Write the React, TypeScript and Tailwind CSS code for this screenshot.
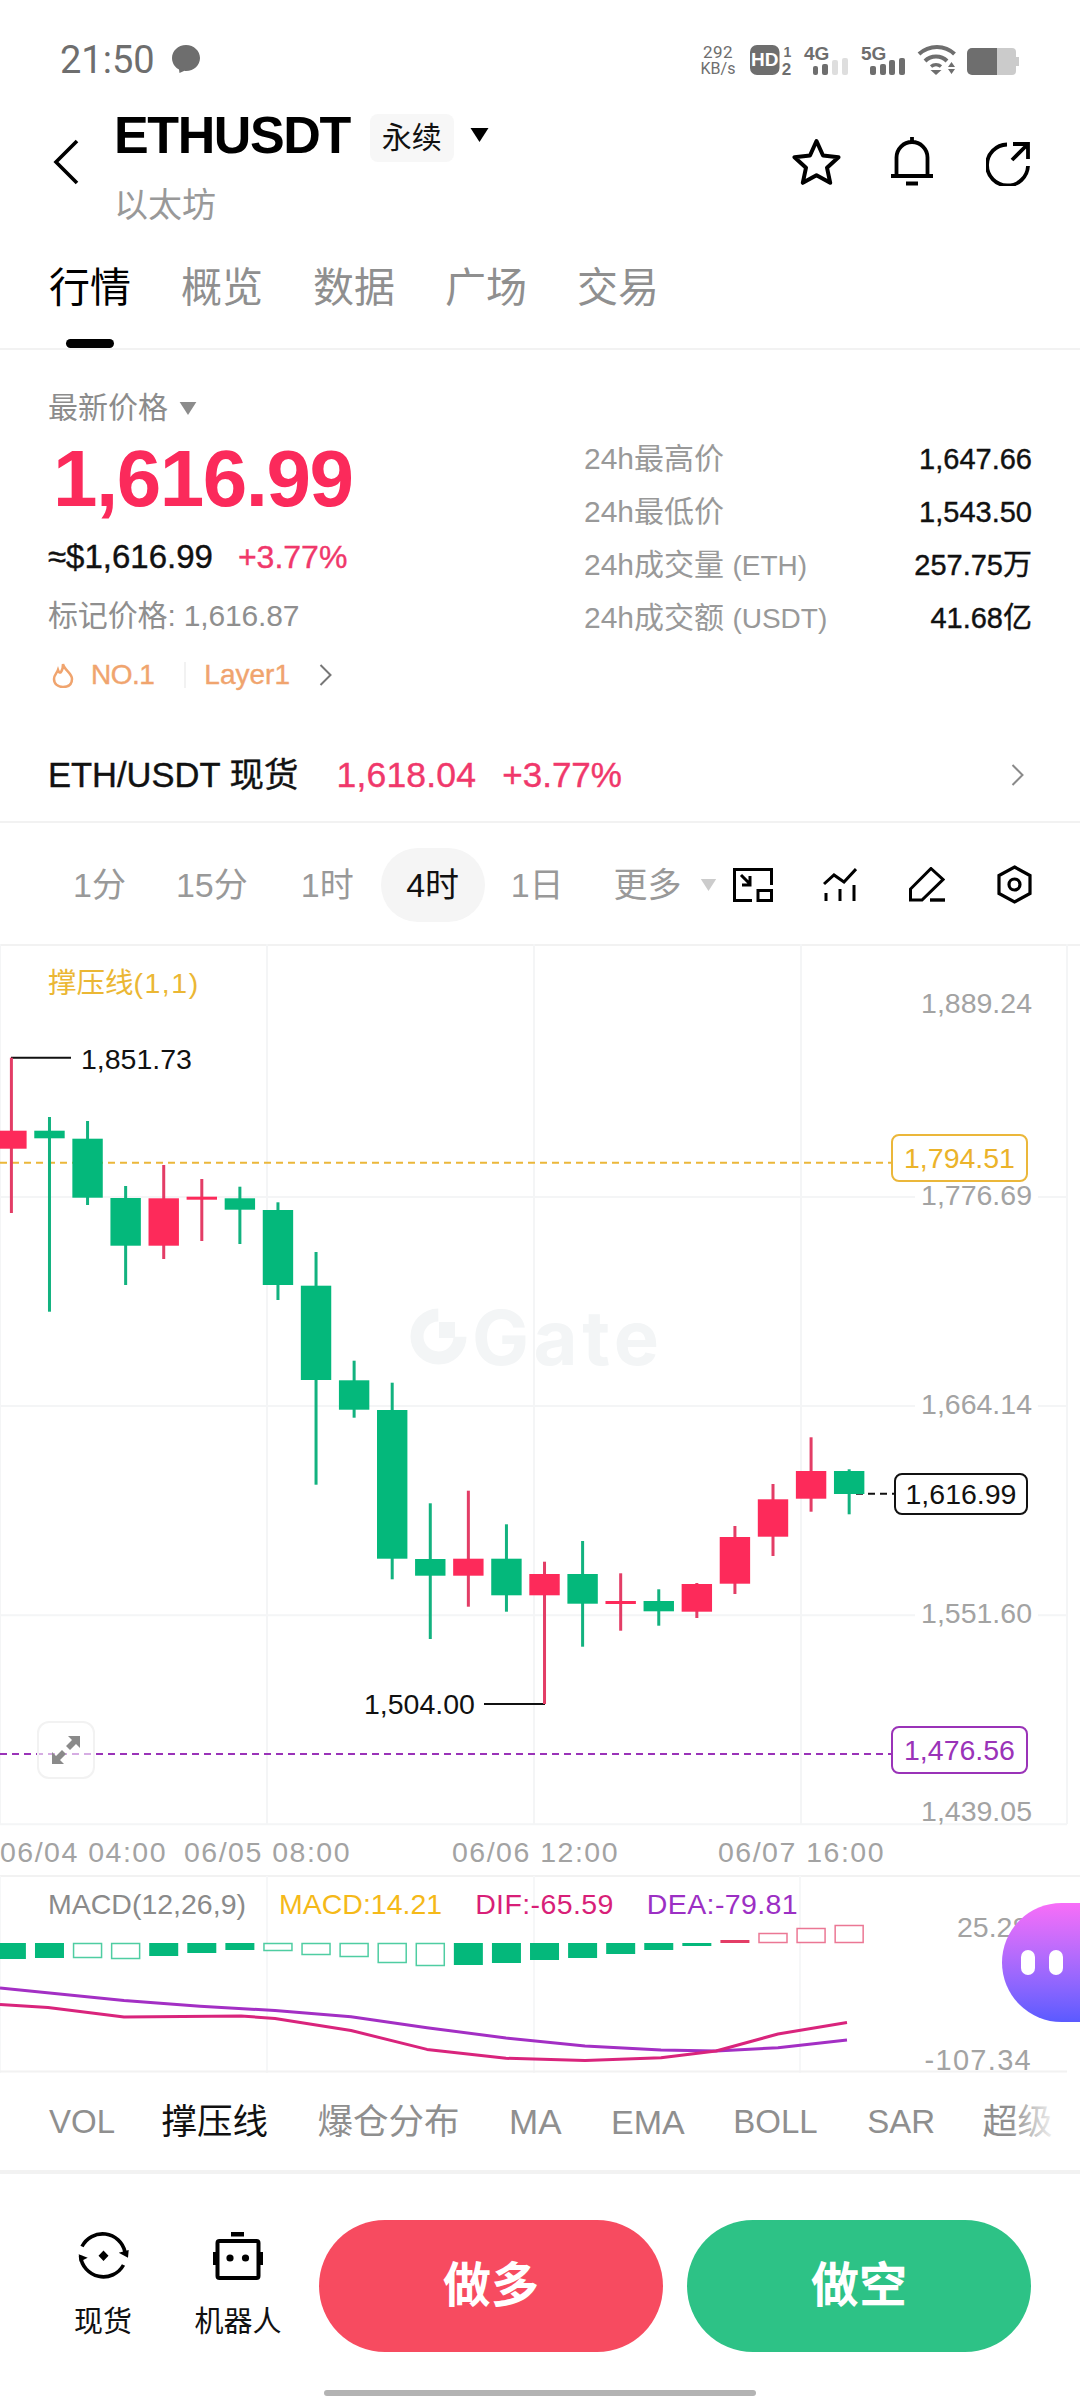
const candles: [number, number, number, number, 'r' | 'g'][] = [
  [1057.7, 1130.7, 1148.7, 1213, 'r'],
  [1117, 1130.7, 1138.3, 1311.7, 'g'],
  [1121, 1138.7, 1197.7, 1205, 'g'],
  [1186, 1198, 1245.7, 1285, 'g'],
  [1165, 1198.3, 1245.7, 1259, 'r'],
  [1179, 1196.7, 1199.7, 1241, 'r'],
  [1186.7, 1198.3, 1209.7, 1244, 'g'],
  [1202.3, 1210, 1285, 1300, 'g'],
  [1252, 1285.7, 1380, 1484.7, 'g'],
  [1360.7, 1380.3, 1409.7, 1417.7, 'g'],
  [1382.7, 1410, 1558.7, 1579.3, 'g'],
  [1503.3, 1559, 1575.7, 1639, 'g'],
  [1490.7, 1558.7, 1575.7, 1606.7, 'r'],
  [1524.3, 1558.7, 1595.3, 1611.7, 'g'],
  [1561.7, 1574, 1595.3, 1704, 'r'],
  [1541, 1574, 1603.7, 1646.7, 'g'],
  [1573.3, 1601, 1604, 1630.7, 'r'],
  [1589.3, 1601, 1611.3, 1625.7, 'g'],
  [1583, 1584, 1611.7, 1618, 'r'],
  [1526, 1537, 1583.7, 1594, 'r'],
  [1484, 1499.3, 1536.7, 1556, 'r'],
  [1437.3, 1471, 1498.7, 1511.7, 'r'],
  [1469.3, 1471, 1494, 1514.3, 'g'],
];

// histogram: top and bottom in px from the section top, hollow bars have only an outline
const macdBars: [number, number, 'r' | 'g', boolean][] = [
  [68, 84, 'g', true],
  [68, 83, 'g', true],
  [68, 83, 'g', false],
  [68, 84, 'g', false],
  [68, 81, 'g', true],
  [68, 78, 'g', true],
  [68, 75, 'g', true],
  [68, 76, 'g', false],
  [68, 80, 'g', false],
  [68, 82, 'g', false],
  [68, 88, 'g', false],
  [68, 91, 'g', false],
  [68, 90, 'g', true],
  [68, 88, 'g', true],
  [68, 85, 'g', true],
  [68, 83, 'g', true],
  [68, 79, 'g', true],
  [68, 75, 'g', true],
  [68, 71, 'g', true],
  [65, 68, 'r', true],
  [58, 68, 'r', false],
  [53, 68, 'r', false],
  [50, 68, 'r', false],
];

const candleX = (i: number) => 11.4 + 38.08 * i;

const Triangle = ({ className, fill }: { className: string; fill: string }) => (
  <svg className={className} viewBox="0 0 20 14">
    <path d="M1 0 H19 L10 14 Z" fill={fill} />
  </svg>
);

const StatusBar = () => (
  <div className="flex h-[90px] pl-[60px] relative">
    <span className="mt-[40px] h-[40px] text-[38px] leading-[40px] text-[#6e6e6e] font-['Roboto',sans-serif]">21:50</span>
    <svg className="ml-[15px] mt-[44px] w-[32px] h-[30px]" viewBox="0 0 32 30">
      <path d="M16 1 C8 1 2 7 2 14 C2 20 6 24 9 25.5 L9.5 29 L14.5 26.8 C15 27 15.5 27 16 27 C24 27 30 21 30 14 C30 7 24 1 16 1 Z" fill="#6e6e6e" />
    </svg>
    <div className="ml-auto mr-[343px] mt-[44px] w-[38px] flex flex-col items-center text-[#6e6e6e] font-['Roboto',sans-serif]">
      <span className="text-[17px] leading-[17px] tracking-[0.5px]">292</span>
      <span className="text-[16px] leading-[15px]">KB/s</span>
    </div>
    <svg className="absolute left-[748px] top-[42px] w-[276px] h-[36px]" viewBox="748 42 276 36">
      <rect x="750" y="45" width="29.5" height="30" rx="7" fill="#6e6e6e" />
      <text x="764.7" y="66" textAnchor="middle" fontSize="19" fontWeight="700" fill="#fff" fontFamily="Liberation Sans">HD</text>
      <text x="787.5" y="57" textAnchor="middle" fontSize="14" fontWeight="700" fill="#6e6e6e" fontFamily="Liberation Sans">1</text>
      <text x="786.5" y="75" textAnchor="middle" fontSize="17" fontWeight="700" fill="#6e6e6e" fontFamily="Liberation Sans">2</text>
      <text x="804" y="60" fontSize="19" fontWeight="700" fill="#6e6e6e" fontFamily="Liberation Sans">4G</text>
      <rect x="813" y="66" width="5" height="9" rx="2" fill="#6e6e6e" />
      <rect x="822" y="64" width="6" height="11" rx="2" fill="#6e6e6e" />
      <rect x="832" y="60" width="6" height="15" rx="2" fill="#dedede" />
      <rect x="842" y="58" width="6" height="17" rx="2" fill="#dedede" />
      <text x="861" y="60" fontSize="19" fontWeight="700" fill="#6e6e6e" fontFamily="Liberation Sans">5G</text>
      <rect x="870" y="66" width="6" height="9" rx="2" fill="#6e6e6e" />
      <rect x="880" y="64" width="6" height="11" rx="2" fill="#6e6e6e" />
      <rect x="889" y="60" width="6" height="15" rx="2" fill="#6e6e6e" />
      <rect x="899" y="58" width="6" height="17" rx="2" fill="#6e6e6e" />
      <path d="M919 54 C929 44.5 945 44.5 954.5 54" fill="none" stroke="#6e6e6e" strokeWidth="4" />
      <path d="M925 61 C931 55 941 55 947 61" fill="none" stroke="#6e6e6e" strokeWidth="4" />
      <path d="M931 66.5 C934 64 938 64 941 66.5" fill="none" stroke="#6e6e6e" strokeWidth="3.5" />
      <path d="M936 75 L930.5 70 H941.5 Z" fill="#6e6e6e" />
      <path d="M951.5 62 L955 67 H948 Z M948 69 H955 L951.5 74 Z" fill="#6e6e6e" />
      <path d="M967 53 a5 5 0 0 1 5 -5 H997 V75 H972 a5 5 0 0 1 -5 -5 Z" fill="#6e6e6e" />
      <path d="M997 48 H1012 a4 4 0 0 1 4 4 V57 H1019 V66 H1016 V71 a4 4 0 0 1 -4 4 H997 Z" fill="#cbcbcb" />
    </svg>
  </div>
);

const Header = () => (
  <div className="flex h-[155px]">
    <svg className="ml-[52px] mt-[48px] w-[28px] h-[48px]" viewBox="0 0 28 48">
      <path d="M25 3 L4 24 L25 45" fill="none" stroke="#000" strokeWidth="3.6" />
    </svg>
    <div className="ml-[34px] flex flex-col">
      <div className="mt-[15px] h-[60px] flex items-center">
        <span className="text-[52px] leading-[60px] font-bold tracking-[-1.4px] text-black -mt-[1px]">ETHUSDT</span>
        <span className="ml-[20px] mt-[5px] w-[84px] h-[48px] flex items-center justify-center bg-[#f7f7f7] rounded-[8px] text-[30px] leading-[48px] text-[#111]">永续</span>
        <Triangle className="ml-[15px] w-[21px] h-[14px]" fill="#000" />
      </div>
      <span className="mt-[18px] h-[44px] text-[34px] leading-[44px] text-[#999]">以太坊</span>
    </div>
    <div className="ml-auto mr-[50px] flex">
      <svg className="mt-[48px] w-[49px] h-[47px]" viewBox="0 0 49 47">
        <path d="M24.5 3 L31 17.5 L46.5 19.2 L35 29.7 L38.2 44.8 L24.5 37.2 L10.8 44.8 L14 29.7 L2.5 19.2 L18 17.5 Z" fill="none" stroke="#000" strokeWidth="4" strokeLinejoin="round" />
      </svg>
      <svg className="ml-[50px] mt-[47px] w-[42px] h-[50px]" viewBox="0 0 42 50">
        <path d="M21 0 V6 M5.5 39 V20.5 a15.5 15.5 0 0 1 31 0 V39 M0 39 H42" fill="none" stroke="#000" strokeWidth="3.8" />
        <path d="M15 46.5 H27" stroke="#000" strokeWidth="4" />
      </svg>
      <svg className="ml-[53px] mt-[52px] w-[44px] h-[44px]" viewBox="0 0 44 44">
        <path d="M21 2.5 A20.5 20.5 0 1 0 42 24 M26 18 L41 3 M27 2 H42 V17" fill="none" stroke="#000" strokeWidth="3.8" />
      </svg>
    </div>
  </div>
);

const Tabs = () => (
  <div className="relative flex h-[105px] gap-[50px] pl-[49px] pt-[18px] border-b-2 border-[#f2f2f2] text-[41px] leading-[50px] text-[#8f8f8f]">
    <span className="text-black">行情</span>
    <span>概览</span>
    <span>数据</span>
    <span>广场</span>
    <span>交易</span>
    <div className="absolute left-[66px] top-[94px] w-[48px] h-[9px] rounded-full bg-black" />
  </div>
);

const stats = [
  { label: '24h最高价', suffix: '', value: '1,647.66' },
  { label: '24h最低价', suffix: '', value: '1,543.50' },
  { label: '24h成交量 ', suffix: '(ETH)', value: '257.75万' },
  { label: '24h成交额 ', suffix: '(USDT)', value: '41.68亿' },
];

const MarketInfo = () => (
  <div className="h-[473px] border-b-2 border-[#f2f2f2] flex flex-col">
    <div className="flex">
      <div className="w-[584px] pl-[48px] pt-[36px] flex flex-col">
        <div className="flex items-center h-[44px] text-[30px] leading-[44px] text-[#8c8c8c]">
          最新价格
          <Triangle className="ml-[10px] w-[20px] h-[13px]" fill="#8c8c8c" />
        </div>
        <span className="mt-[9px] ml-[5px] h-[80px] text-[80px] leading-[80px] font-bold tracking-[-1.5px] text-[#fb2a5b]">1,616.99</span>
        <div className="mt-[18px] flex h-[40px] text-[33px] leading-[40px] gap-[25px] [-webkit-text-stroke:0.4px]">
          <span className="text-[#111]">≈$1,616.99</span>
          <span className="text-[32px] text-[#f0386b]">+3.77%</span>
        </div>
        <span className="mt-[19px] h-[40px] text-[30px] leading-[40px] tracking-[-0.15px] text-[#8f8f8f]">标记价格: 1,616.87</span>
        <div className="mt-[19px] flex items-center h-[40px] text-[28px] leading-[40px] text-[#f0a46e] [-webkit-text-stroke:0.4px]">
          <svg className="ml-[4px] w-[22px] h-[25px]" viewBox="0 0 22 25">
            <path d="M11 1 C12 7 20 10 20 16 C20 22 16 24 11 24 C6 24 2 21 2 16 C2 12 5 10 6 7 C7 10 8 10 9 9 C10.5 7 11 4 11 1 Z" fill="none" stroke="#f0a46e" strokeWidth="2.5" />
          </svg>
          <span className="ml-[17px] tracking-[-0.5px]">NO.1</span>
          <div className="ml-[30px] w-[2px] h-[26px] bg-[#f2f2f2]" />
          <span className="ml-[18px]">Layer1</span>
          <svg className="ml-[29px] w-[13px] h-[22px]" viewBox="0 0 13 22">
            <path d="M1.5 1 L11.5 11 L1.5 21" fill="none" stroke="#777" strokeWidth="2" />
          </svg>
        </div>
      </div>
      <div className="w-[448px] pt-[89px] flex flex-col gap-[13px]">
        {stats.map((s) => (
          <div key={s.label} className="flex justify-between h-[40px] leading-[40px]">
            <span className="text-[30px] text-[#999] whitespace-pre">
              {s.label}
              <span className="text-[28px]">{s.suffix}</span>
            </span>
            <span className="text-[29px] text-[#111] [-webkit-text-stroke:0.4px]">{s.value}</span>
          </div>
        ))}
      </div>
    </div>
    <div className="mt-[55px] pl-[48px] flex items-center h-[50px] text-[34.5px] leading-[50px] [-webkit-text-stroke:0.4px]">
      <span className="text-[#111]">ETH/USDT 现货</span>
      <span className="ml-[38px] text-[35.5px] tracking-[0.2px] text-[#f0386b]">1,618.04</span>
      <span className="ml-[26px] text-[35px] text-[#f0386b]">+3.77%</span>
      <svg className="ml-auto mr-[56px] w-[13px] h-[22px]" viewBox="0 0 13 22">
        <path d="M1.5 1 L11.5 11 L1.5 21" fill="none" stroke="#8a8a8a" strokeWidth="2" />
      </svg>
    </div>
  </div>
);

const Timeframes = () => (
  <div className="h-[121px] pt-[2px] flex items-center pl-[73px] text-[34px] leading-[50px] text-[#999]">
    <span>1分</span>
    <span className="ml-[50px]">15分</span>
    <span className="ml-[53px]">1时</span>
    <span className="ml-[27px] w-[104px] h-[74px] rounded-[37px] bg-[#f5f5f5] flex items-center justify-center text-[#111]">4时</span>
    <span className="ml-[26px]">1日</span>
    <span className="ml-[50px]">更多</span>
    <Triangle className="ml-[17px] w-[19px] h-[12px]" fill="#cccccc" />
    <svg className="ml-[15px] w-[40px] h-[34px]" viewBox="0 0 40 34">
      <path d="M38.5 17 V1.5 H1.5 V32.5 H19" fill="none" stroke="#000" strokeWidth="3" />
      <rect x="25" y="22.5" width="13.5" height="10" fill="none" stroke="#000" strokeWidth="3" />
      <path d="M8 7 L17 16 M17 8 V17 H9" fill="none" stroke="#000" strokeWidth="3" />
    </svg>
    <svg className="ml-[50px] w-[34px] h-[33px]" viewBox="0 0 34 33">
      <path d="M1 16 L11 7 L21 14 L33 1" fill="none" stroke="#000" strokeWidth="3" />
      <path d="M3 25 V33 M17 21 V33 M31 17 V33" stroke="#000" strokeWidth="3" />
    </svg>
    <svg className="ml-[52px] w-[36px] h-[35px]" viewBox="0 0 36 35">
      <path d="M22 1.5 L34 12.5 L13 33 H1.5 V22 Z" fill="none" stroke="#000" strokeWidth="3" />
      <path d="M21 33 H36" stroke="#000" strokeWidth="3.4" />
    </svg>
    <svg className="ml-[52px] w-[35px] h-[39px]" viewBox="0 0 35 39">
      <path d="M17.5 2 L33 10.5 V28.5 L17.5 37 L2 28.5 V10.5 Z" fill="none" stroke="#000" strokeWidth="3.2" />
      <circle cx="17.5" cy="19.5" r="5.5" fill="none" stroke="#000" strokeWidth="3.2" />
    </svg>
  </div>
);

const Chart = () => (
  <div className="relative h-[931px] text-[28.5px] leading-[36px]">
    <svg className="absolute left-0 top-0 w-[1080px] h-[931px]" viewBox="0 944 1080 931">
      <path d="M0 945 H1080" stroke="#f2f2f2" strokeWidth="2" />
      <g stroke="#f4f5f6" strokeWidth="2">
        <path d="M0 1197 H1067 M0 1406 H1067 M0 1615.3 H1067 M0 1824.3 H1067" />
        <path d="M0 944 V1824 M267 944 V1824 M534 944 V1824 M801 944 V1824 M1067 944 V1824" />
      </g>
      <path d="M438.3 1315 A21.5 21.5 0 1 0 460 1336.7" fill="none" stroke="#f3f5f6" strokeWidth="13" />
      <rect x="439" y="1322" width="16" height="16" fill="#f3f5f6" />
      <path d="M0 1162.7 H891" stroke="#ebb73a" strokeWidth="2" strokeDasharray="7 5" />
      <path d="M0 1754 H891" stroke="#9a33b8" strokeWidth="2" strokeDasharray="7 5" />
      <path d="M856 1493.7 H895" stroke="#111" strokeWidth="2" strokeDasharray="7 5" />
      <path d="M11 1057.7 H71 M484 1704 H545" stroke="#111" strokeWidth="2" fill="none" />
      {candles.map(([hi, top, bottom, lo, c], i) => {
        const x = candleX(i);
        return (
          <g key={i}>
            <rect x={x - 1.5} y={hi} width="3" height={lo - hi} fill={c === 'r' ? '#e33d66' : '#12b27f'} />
            <rect x={x - 15.2} y={top} width="30.4" height={bottom - top} fill={c === 'r' ? '#fd2a5a' : '#04b87b'} />
          </g>
        );
      })}
    </svg>

    <span className="absolute left-[472px] top-[358px] h-[70px] text-[76px] leading-[70px] font-bold font-['Inter',sans-serif] tracking-[4.5px] text-[#f3f5f6]">Gate</span>

    <span className="absolute left-[48px] top-[21px] text-[#ebb734]">
      撑压线<span className="tracking-[1.5px]">(1,1)</span>
    </span>

    <span className="absolute right-[48px] top-[41px] text-[#a3a3a3]">1,889.24</span>
    <span className="absolute right-[48px] top-[233px] pl-[6px] pr-[6px] -mr-[6px] bg-white text-[#a3a3a3]">1,776.69</span>
    <span className="absolute right-[48px] top-[442px] pl-[6px] pr-[6px] -mr-[6px] bg-white text-[#a3a3a3]">1,664.14</span>
    <span className="absolute right-[48px] top-[651px] pl-[6px] pr-[6px] -mr-[6px] bg-white text-[#a3a3a3]">1,551.60</span>
    <span className="absolute right-[48px] top-[849px] text-[#a3a3a3]">1,439.05</span>

    <div className="absolute left-[891px] top-[190px] w-[137px] h-[48px] flex items-center justify-center bg-white border-2 border-[#ebb73a] rounded-[8px] text-[#ebb32a]">1,794.51</div>
    <div className="absolute left-[894px] top-[529px] w-[134px] h-[42px] flex items-center justify-center bg-white border-2 border-[#111] rounded-[8px] text-[#111]">1,616.99</div>
    <div className="absolute left-[891px] top-[782px] w-[137px] h-[48px] flex items-center justify-center bg-white border-2 border-[#9a33b8] rounded-[8px] text-[#9a33b8]">1,476.56</div>

    <span className="absolute left-[81px] top-[97px] text-[#111]">1,851.73</span>
    <span className="absolute left-[364px] top-[742px] text-[#111]">1,504.00</span>

    <div className="absolute left-[37px] top-[777px] w-[58px] h-[58px] flex items-center justify-center rounded-[12px] border-2 border-[#f2f2f2] bg-white/60">
      <svg className="w-[28px] h-[28px]" viewBox="0 0 28 28">
        <path d="M16 0 H28 V12 L24 8 L18 14 L14 10 L20 4 Z M12 28 H0 V16 L4 20 L10 14 L14 18 L8 24 Z" fill="#8a8a8a" />
      </svg>
    </div>

    <span className="absolute left-0 top-[890px] text-[#a3a3a3] tracking-[1.5px]">06/04 04:00</span>
    <span className="absolute left-[184px] top-[890px] text-[#a3a3a3] tracking-[1.5px]">06/05 08:00</span>
    <span className="absolute left-[452px] top-[890px] text-[#a3a3a3] tracking-[1.5px]">06/06 12:00</span>
    <span className="absolute left-[718px] top-[890px] text-[#a3a3a3] tracking-[1.5px]">06/07 16:00</span>
  </div>
);

const Macd = () => (
  <div className="relative h-[198px] border-t-2 border-[#f2f2f2]">
    <svg className="absolute left-0 -top-[2px] w-[1080px] h-[198px]" viewBox="0 0 1080 198">
      <path d="M0 1 V198 M267 1 V198 M534 1 V198 M800 1 V198" stroke="#f6f7f8" strokeWidth="2" />
      <path d="M0 196.5 H1067" stroke="#f2f2f2" strokeWidth="2" />
      {macdBars.map(([top, bottom, c, filled], i) => {
        const x = candleX(i) - 14.5;
        const col = c === 'r' ? '#e33d66' : '#04b87b';
        return filled ? (
          <rect key={i} x={x} y={top} width="29" height={bottom - top} fill={col} />
        ) : (
          <rect key={i} x={x + 0.5} y={top + 0.5} width="28" height={bottom - top - 1} fill="#fff" stroke={col} strokeOpacity="0.7" strokeWidth="1.5" />
        );
      })}
      <polyline
        points="0,113 124,125.5 200,131.3 275,135.5 351,141.7 427,152.7 506,163 585,171 661,175 716,176 778,172.7 847,165"
        fill="none"
        stroke="#a32fc4"
        strokeWidth="3"
        strokeLinejoin="round"
      />
      <polyline
        points="0,129.6 48,132.4 124,142 241,141 275,143.4 351,155.5 427,174.4 506,183.3 585,185.4 661,182.7 716,176 778,159 847,147.5"
        fill="none"
        stroke="#d9247c"
        strokeWidth="3"
        strokeLinejoin="round"
      />
    </svg>
    <div className="relative pl-[48px] pt-[9px] flex gap-[33px] text-[28.5px] leading-[36px]">
      <span className="text-[#8a8a8a]">MACD(12,26,9)</span>
      <span className="text-[#f5b919]">MACD:14.21</span>
      <span className="text-[#d81f78] tracking-[0.4px]">DIF:-65.59</span>
      <span className="text-[#9c2fc4] tracking-[0.4px]">DEA:-79.81</span>
    </div>
    <span className="absolute left-[957px] top-[32px] text-[28.5px] leading-[36px] text-[#a3a3a3]">25.28</span>
    <span className="absolute right-[48px] top-[165px] text-[29px] leading-[36px] tracking-[1.3px] text-[#a3a3a3]">-107.34</span>
    <div className="absolute left-[1002px] top-[26px] w-[78px] h-[119px] rounded-l-[60px] bg-gradient-to-b from-[#f86df8] to-[#5a5aff] flex items-center gap-[14px] pl-[19px]">
      <div className="w-[14px] h-[25px] rounded-full bg-white" />
      <div className="w-[14px] h-[25px] rounded-full bg-white" />
    </div>
  </div>
);

const Indicators = () => (
  <div className="relative h-[97px] flex items-center pl-[49px] gap-[49.5px] overflow-hidden text-[33px] leading-[50px] text-[#8f8f8f] whitespace-nowrap">
    <span>VOL</span>
    <span className="text-[35.5px] text-[#111] -ml-[3px]">撑压线</span>
    <span className="text-[35.5px]">爆仓分布</span>
    <span className="text-[35px]">MA</span>
    <span className="text-[34px]">EMA</span>
    <span className="-ml-[1px]">BOLL</span>
    <span>SAR</span>
    <span className="text-[35px] -ml-[2px]">超级</span>
    <div className="absolute right-0 top-0 w-[70px] h-full bg-gradient-to-r from-white/0 to-white to-[70%]" />
  </div>
);

const BottomBar = () => (
  <div className="relative h-[230px] flex border-t-4 border-[#f2f2f2]">
    <div className="ml-[53px] w-[100px] pt-[57px] flex flex-col items-center">
      <svg className="w-[51px] h-[50px]" viewBox="0 0 51 50">
        <path d="M4 15.5 A23 23 0 0 1 47 21 M45.5 34 A23 23 0 0 1 2.5 25" fill="none" stroke="#000" strokeWidth="3.6" />
        <path d="M40.7 21.7 L50.7 19 L50 26.7 Z M0.7 23.3 L9.7 26.7 L1.7 30.7 Z M25.5 19.5 L30.5 24.7 L25.5 30 L20.5 24.7 Z" fill="#000" />
      </svg>
      <span className="mt-[23px] text-[29px] leading-[36px] text-[#111]">现货</span>
    </div>
    <div className="ml-[35px] w-[100px] pt-[57px] flex flex-col items-center">
      <svg className="w-[50px] h-[50px]" viewBox="0 0 50 48">
        <path d="M18 0 H31 V4.5 H18 Z M0 20 H3 V33 H0 Z M47 20 H50 V33 H47 Z" fill="#000" />
        <rect x="4.5" y="9" width="41" height="37" rx="2" fill="none" stroke="#000" strokeWidth="4" />
        <circle cx="17" cy="26" r="3.6" fill="#000" />
        <circle cx="32.5" cy="26" r="3.6" fill="#000" />
      </svg>
      <span className="mt-[23px] text-[29px] leading-[36px] text-[#111]">机器人</span>
    </div>
    <div className="ml-[31px] mt-[46px] w-[344px] h-[132px] rounded-[66px] bg-[#f74b60] flex items-center justify-center text-[48px] font-bold text-white">做多</div>
    <div className="ml-[24px] mt-[46px] w-[344px] h-[132px] rounded-[66px] bg-[#2dc286] flex items-center justify-center text-[48px] font-bold text-white">做空</div>
    <div className="absolute left-[324px] top-[216px] w-[432px] h-[6px] rounded-full bg-[#b3b3b3]" />
  </div>
);

export default function App() {
  return (
    <div className="relative w-[1080px] h-[2400px] overflow-hidden bg-white font-['Liberation_Sans','Noto_Sans_CJK_SC',sans-serif]">
      <StatusBar />
      <Header />
      <Tabs />
      <MarketInfo />
      <Timeframes />
      <Chart />
      <Macd />
      <Indicators />
      <BottomBar />
    </div>
  );
}
